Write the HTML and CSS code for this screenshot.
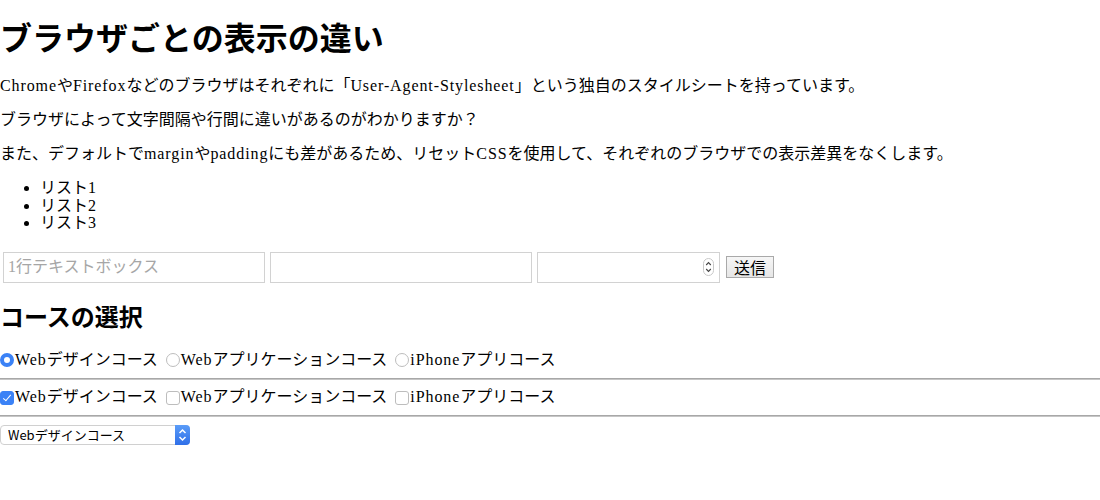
FILE: index.html
```html
<!DOCTYPE html>
<html lang="ja">
<head>
<meta charset="utf-8">
<title>ブラウザごとの表示の違い</title>
<link rel="stylesheet" href="styles.css">
</head>
<body>
<h1 class="title">ブラウザごとの表示の違い</h1>
<p class="text"><span class="en">Chrome</span>や<span class="en">Firefox</span>などのブラウザはそれぞれに「<span class="en">User-Agent-Stylesheet</span>」という独自のスタイルシートを持っています。</p>
<p class="text">ブラウザによって文字間隔や行間に違いがあるのがわかりますか？</p>
<p class="text">また、デフォルトで<span class="en">margin</span>や<span class="en">padding</span>にも差があるため、リセット<span class="en">CSS</span>を使用して、それぞれのブラウザでの表示差異をなくします。</p>
<ul class="list">
  <li>リスト<span class="en">1</span></li>
  <li>リスト<span class="en">2</span></li>
  <li>リスト<span class="en">3</span></li>
</ul>
<form class="form">
  <div class="input-row">
    <input class="field" type="text" placeholder="1行テキストボックス">
    <input class="field" type="text">
    <span class="num-wrap">
      <input class="field num" type="number">
      <span class="stepper">
        <svg width="11" height="18" viewBox="0 0 11 18"><rect x="0.5" y="0.5" width="10" height="17" rx="5" fill="#fff" stroke="#c8c8c8"/><path d="M3.2 7 5.5 4.6 7.8 7" fill="none" stroke="#444" stroke-width="1.1"/><path d="M3.2 11 5.5 13.4 7.8 11" fill="none" stroke="#444" stroke-width="1.1"/></svg>
      </span>
    </span>
    <button class="btn" type="button">送信</button>
  </div>
  <h2 class="subtitle">コースの選択</h2>
  <div class="choice-row">
    <label class="choice"><input class="radio" type="radio" name="c" checked><span class="en">Web</span>デザインコース</label>
    <label class="choice"><input class="radio" type="radio" name="c"><span class="en">Web</span>アプリケーションコース</label>
    <label class="choice"><input class="radio" type="radio" name="c"><span class="en">iPhone</span>アプリコース</label>
  </div>
  <hr class="rule">
  <div class="choice-row">
    <label class="choice"><input class="check" type="checkbox" checked><span class="en">Web</span>デザインコース</label>
    <label class="choice"><input class="check" type="checkbox"><span class="en">Web</span>アプリケーションコース</label>
    <label class="choice"><input class="check" type="checkbox"><span class="en">iPhone</span>アプリコース</label>
  </div>
  <hr class="rule">
  <div class="select-wrap">
    <select class="select">
      <option>Webデザインコース</option>
      <option>Webアプリケーションコース</option>
      <option>iPhoneアプリコース</option>
    </select>
    <span class="select-btn">
      <svg width="15" height="20" viewBox="0 0 15 20"><path d="M4.5 8 7.5 5 10.5 8" fill="none" stroke="#fff" stroke-width="1.5"/><path d="M4.5 12 7.5 15 10.5 12" fill="none" stroke="#fff" stroke-width="1.5"/></svg>
    </span>
  </div>
</form>
</body>
</html>
```

FILE: styles.css
```css
html, body {
  background: #fff;
}
body {
  margin: 0;
  color: #000;
  font-family: "Liberation Serif", "Noto Sans CJK JP", serif;
  font-size: 16px;
}
.en {
  letter-spacing: 0.9px;
}
.title {
  margin: 22px 0 21px;
  font-size: 32px;
  line-height: 34px;
  font-weight: bold;
}
.text {
  margin: 16px 0;
  line-height: 18px;
}
.list {
  margin: 16px 0;
  padding-left: 40px;
}
.list li {
  line-height: 17.5px;
}
.form {
  margin: 0;
}
.input-row {
  display: flex;
  align-items: center;
  gap: 5px;
  margin-top: 20px;
  padding-left: 3px;
  height: 31px;
}
.field {
  box-sizing: border-box;
  width: 262px;
  height: 31px;
  margin: 0;
  padding: 0 4px;
  border: 1px solid #d2d2d2;
  background: #fff;
  font: inherit;
  font-size: 16px;
  color: #000;
  outline: none;
}
.field::placeholder {
  color: #a6a6a6;
}
.num-wrap {
  position: relative;
  display: block;
  height: 31px;
}
.num {
  width: 183px;
  -moz-appearance: textfield;
}
.num::-webkit-inner-spin-button,
.num::-webkit-outer-spin-button {
  -webkit-appearance: none;
  margin: 0;
}
.stepper {
  position: absolute;
  top: 6px;
  right: 6px;
  width: 11px;
  height: 18px;
  display: flex;
}
.btn {
  box-sizing: border-box;
  height: 22px;
  margin: 0 0 0 1px;
  padding: 0 7px;
  border: 1px solid #a9a9a9;
  background: linear-gradient(#f6f6f6, #e6e6e6);
  font-family: "Noto Sans CJK JP", sans-serif;
  font-size: 16px;
  line-height: 20px;
  color: #000;
}
.subtitle {
  margin: 21px 0 19px;
  font-size: 24px;
  line-height: 28px;
  font-weight: bold;
}
.choice-row {
  display: flex;
  align-items: center;
  gap: 8px;
  height: 18px;
  line-height: 18px;
}
.choice {
  display: flex;
  align-items: center;
}
.radio {
  -webkit-appearance: none;
  appearance: none;
  box-sizing: border-box;
  flex: none;
  width: 14px;
  height: 14px;
  margin: 0 1px 0 0;
  border: 1px solid #bdbdbd;
  border-radius: 50%;
  background: #fff;
}
.radio:checked {
  border: 4.5px solid #3b82f6;
  background: #fff;
}
.check {
  -webkit-appearance: none;
  appearance: none;
  box-sizing: border-box;
  position: relative;
  flex: none;
  width: 14px;
  height: 14px;
  margin: 2px 1px 0 0;
  border: 1px solid #bdbdbd;
  border-radius: 3px;
  background: #fff;
}
.check:checked {
  border-color: #3b82f6;
  background: #3b82f6;
}
.check:checked::after {
  content: "";
  position: absolute;
  left: 4px;
  top: 1px;
  width: 3px;
  height: 7px;
  border: solid #fff;
  border-width: 0 1.6px 1.6px 0;
  transform: rotate(40deg);
}
.rule {
  margin: 9px 0 8px;
  height: 0;
  border: 0;
  border-top: 1px solid #a8a8a8;
  border-bottom: 1px solid #c6c6c6;
}
.select-wrap {
  position: relative;
  width: 190px;
  height: 20px;
  margin-top: 2px;
}
.select {
  -webkit-appearance: none;
  appearance: none;
  box-sizing: border-box;
  width: 190px;
  height: 20px;
  margin: 0;
  padding: 0 0 0 7px;
  border: 1px solid #d0d0d0;
  border-radius: 4px;
  background: #fff;
  font-family: "Noto Sans CJK JP", sans-serif;
  font-size: 13px;
  line-height: 18px;
  color: #000;
  outline: none;
}
.select-btn {
  position: absolute;
  top: 0;
  right: 0;
  width: 15px;
  height: 20px;
  border-radius: 0 4px 4px 0;
  background: linear-gradient(#5a9cf8, #2f6fe8);
  display: flex;
}
```
